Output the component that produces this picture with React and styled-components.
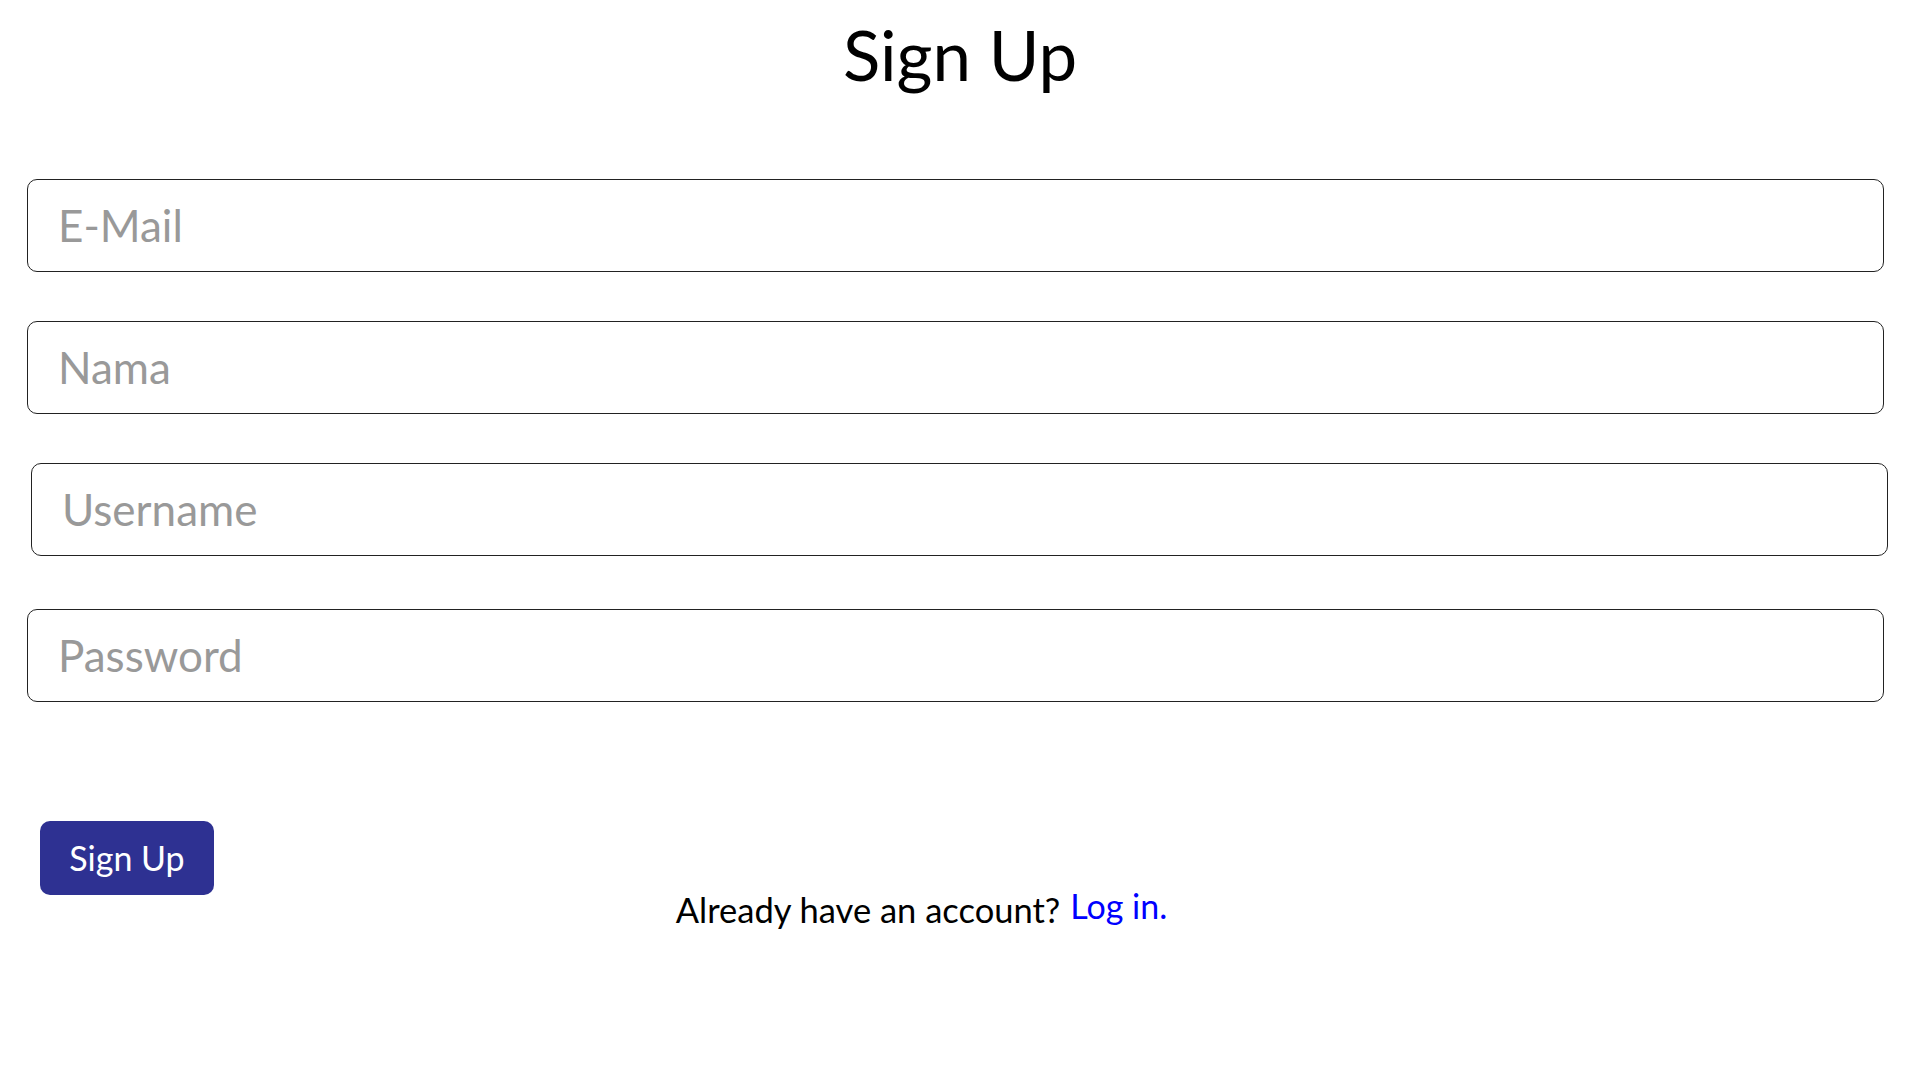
import React from 'react';
import styled, { createGlobalStyle } from 'styled-components';

const GlobalStyle = createGlobalStyle`
  html, body {
    margin: 0;
    padding: 0;
    background: #ffffff;
  }
  body {
    font-family: Lato, "Open Sans", sans-serif;
    color: #000000;
  }
`;

const PageWrapper = styled.div`
  min-height: 100vh;
  display: flex;
  flex-direction: column;
  background-color: #ffffff;
`;

const Title = styled.h1`
  margin: 14px 0 0;
  text-align: center;
  font-size: 69px;
  font-weight: 400;
  line-height: 1.2;
`;

const Form = styled.form`
  display: flex;
  flex-direction: column;
  padding: 0 36px 0 27px;
  margin-top: 82px;
`;

const Field = styled.input`
  box-sizing: border-box;
  width: 100%;
  height: 93px;
  margin: 0 0 ${(p) => p.$gap}px ${(p) => p.$shift}px;
  padding: 0 0 0 30px;
  border: 1px solid #222222;
  border-radius: 10px;
  background: #ffffff;
  font-family: Lato, "Open Sans", sans-serif;
  font-size: 44px;
  color: #333333;
  outline: none;
  &::placeholder {
    color: #999999;
  }
`;

const Button = styled.button`
  align-self: flex-start;
  box-sizing: border-box;
  width: 174px;
  height: 74px;
  margin: 119px 0 0 13px;
  padding: 0;
  border: none;
  border-radius: 10px;
  background-color: #2e3192;
  color: #ffffff;
  font-family: Lato, "Open Sans", sans-serif;
  font-size: 34px;
  line-height: 1;
  cursor: pointer;
`;

const Footer = styled.p`
  margin: -9px 0 0;
  padding-right: 77px;
  text-align: center;
  font-size: 34.5px;
  line-height: 1.2;
  color: #000000;
`;

const LoginLink = styled.a`
  margin-left: 10px;
  font-size: 34px;
  color: #0000ff;
  text-decoration: none;
  vertical-align: 4px;
  cursor: pointer;
`;

const fields = [
  { name: 'email', type: 'email', placeholder: 'E-Mail', gap: 49, shift: 0 },
  { name: 'nama', type: 'text', placeholder: 'Nama', gap: 49, shift: 0 },
  { name: 'username', type: 'text', placeholder: 'Username', gap: 53, shift: 4 },
  { name: 'password', type: 'password', placeholder: 'Password', gap: 0, shift: 0 },
];

const App = () => {
  return (
    <PageWrapper>
      <GlobalStyle />
      <Title>Sign Up</Title>
      <Form onSubmit={(e) => e.preventDefault()}>
        {fields.map((f) => (
          <Field
            key={f.name}
            name={f.name}
            type={f.type}
            placeholder={f.placeholder}
            $gap={f.gap}
            $shift={f.shift}
          />
        ))}
        <Button type="submit">Sign Up</Button>
      </Form>
      <Footer>
        Already have an account?<LoginLink>Log in.</LoginLink>
      </Footer>
    </PageWrapper>
  );
};

export default App;
